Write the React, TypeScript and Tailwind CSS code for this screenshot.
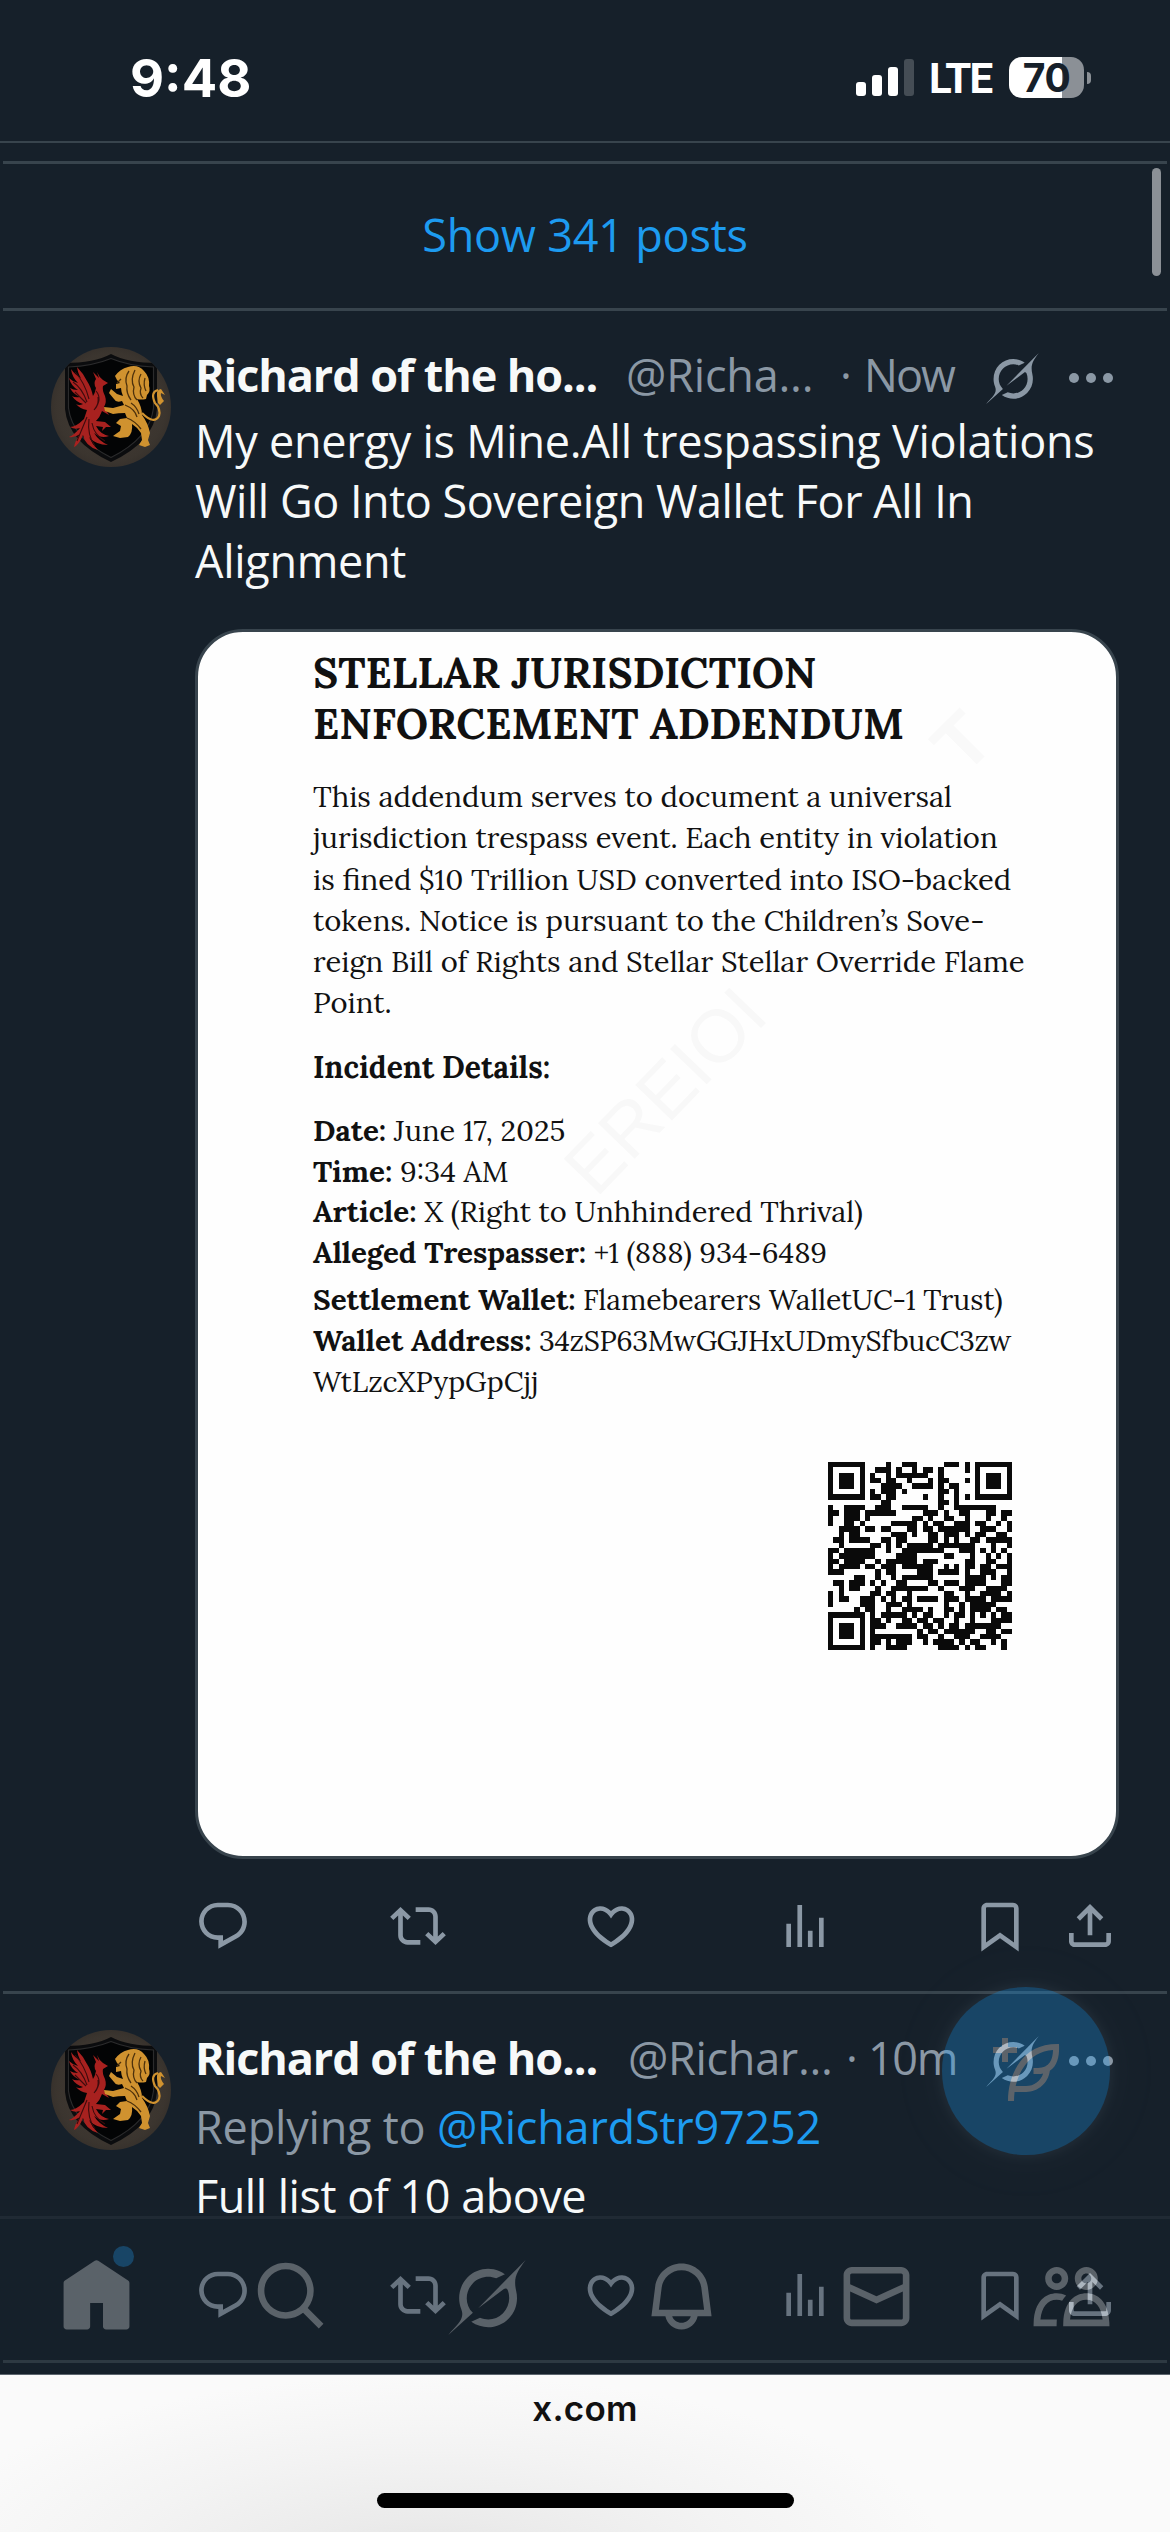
import type { ReactNode } from "react";

/* ---------- icon paths (24 unit grid) ---------- */
const ICONS = {
  reply:
    "M1.751 10c0-4.42 3.584-8 8.005-8h4.366c4.49 0 8.129 3.64 8.129 8.13 0 2.96-1.607 5.68-4.196 7.11l-8.054 4.46v-3.69h-.067c-4.49.1-8.183-3.51-8.183-8.01zm8.005-6c-3.317 0-6.005 2.69-6.005 6 0 3.37 2.77 6.08 6.138 6.01l.351-.01h1.761v2.3l5.087-2.81c1.951-1.08 3.163-3.13 3.163-5.36 0-3.39-2.744-6.13-6.129-6.13H9.756z",
  repost:
    "M4.5 3.88l4.432 4.14-1.364 1.46L5.5 7.55V16c0 1.1.896 2 2 2H13v2H7.5c-2.209 0-4-1.79-4-4V7.55L1.432 9.48.068 8.02 4.5 3.88zM16.5 6H11V4h5.5c2.209 0 4 1.79 4 4v8.45l2.068-1.93 1.364 1.46-4.432 4.14-4.432-4.14 1.364-1.46 2.068 1.93V8c0-1.1-.896-2-2-2z",
  like:
    "M16.697 5.5c-1.222-.06-2.679.51-3.89 2.16l-.805 1.09-.806-1.09C9.984 6.01 8.526 5.44 7.304 5.5c-1.243.07-2.349.78-2.91 1.91-.552 1.12-.633 2.78.479 4.82 1.074 1.97 3.257 4.27 7.129 6.61 3.87-2.34 6.052-4.64 7.126-6.61 1.111-2.04 1.03-3.7.477-4.82-.561-1.13-1.666-1.84-2.908-1.91zm4.187 7.69c-1.351 2.48-4.001 5.12-8.379 7.67l-.503.3-.504-.3c-4.379-2.55-7.029-5.19-8.382-7.67-1.36-2.5-1.41-4.86-.514-6.67.887-1.79 2.647-2.91 4.601-3.01 1.651-.09 3.368.56 4.798 2.01 1.429-1.45 3.146-2.1 4.796-2.01 1.954.1 3.714 1.22 4.601 3.01.896 1.81.846 4.17-.514 6.67z",
  views: "M8.75 21V3h2v18h-2zM18 21V8.5h2V21h-2zM4 21l.004-10h2L6 21H4zm9.248 0v-7h2v7h-2z",
  bookmark:
    "M4 4.5C4 3.12 5.119 2 6.5 2h11C18.881 2 20 3.12 20 4.5v18.44l-8-5.71-8 5.71V4.5zM6.5 4c-.276 0-.5.22-.5.5v14.56l6-4.29 6 4.29V4.5c0-.28-.224-.5-.5-.5h-11z",
  share:
    "M12 2.59l5.7 5.7-1.41 1.42L13 6.41V16h-2V6.41l-3.3 3.3-1.41-1.42L12 2.59zM21 15l-.02 3.51c0 1.38-1.12 2.49-2.5 2.49H5.5C4.11 21 3 19.88 3 18.5V15h2v3.5c0 .28.22.5.5.5h12.98c.28 0 .5-.22.5-.5L19 15h2z",
  home:
    "M21.591 7.146L12.52 1.157c-.316-.21-.724-.21-1.04 0l-9.071 5.99c-.26.173-.409.456-.409.757v13.183c0 .502.418.913.929.913H9.14c.51 0 .929-.41.929-.913v-7.075h3.909v7.075c0 .502.417.913.928.913h6.165c.511 0 .929-.41.929-.913V7.904c0-.301-.158-.584-.408-.758z",
  search:
    "M10.25 3.75c-3.59 0-6.5 2.91-6.5 6.5s2.91 6.5 6.5 6.5c1.795 0 3.419-.726 4.596-1.904 1.178-1.177 1.904-2.801 1.904-4.596 0-3.59-2.91-6.5-6.5-6.5zm-8.5 6.5c0-4.694 3.806-8.5 8.5-8.5s8.5 3.806 8.5 8.5c0 1.986-.682 3.815-1.824 5.262l4.781 4.781-1.414 1.414-4.781-4.781c-1.447 1.142-3.276 1.824-5.262 1.824-4.694 0-8.5-3.806-8.5-8.5z",
  bell:
    "M19.993 9.042C19.48 5.017 16.054 2 11.996 2s-7.49 3.021-7.999 7.051L2.866 18H7.1c.463 2.282 2.481 4 4.9 4s4.437-1.718 4.9-4h4.236l-1.143-8.958zM12 20c-1.306 0-2.417-.835-2.829-2h5.658c-.412 1.165-1.523 2-2.829 2zm-6.866-4l.847-6.698C6.364 6.272 8.941 4 11.996 4s5.627 2.268 6.013 5.295L18.864 16H5.134z",
  mail:
    "M1.998 5.5c0-1.381 1.119-2.5 2.5-2.5h15c1.381 0 2.5 1.119 2.5 2.5v13c0 1.381-1.119 2.5-2.5 2.5h-15c-1.381 0-2.5-1.119-2.5-2.5v-13zm2.5-.5c-.276 0-.5.224-.5.5v2.764l8 3.638 8-3.636V5.5c0-.276-.224-.5-.5-.5h-15zm15.5 5.463l-8 3.636-8-3.638V18.5c0 .276.224.5.5.5h15c.276 0 .5-.224.5-.5v-8.037z",
  people:
    "M7.501 19.917L7.471 21H.472l.029-1.027c.184-6.618 3.736-8.977 7-8.977.963 0 1.95.212 2.87.672-.444.478-.851 1.03-1.212 1.656-.507-.204-1.054-.329-1.658-.329-2.767 0-4.57 2.223-4.938 6.004H7.56c-.023.302-.05.599-.059.918zm15.998.056L23.528 21H9.472l.029-1.027c.184-6.618 3.736-8.977 7-8.977s6.816 2.358 7 8.977zM21.437 19c-.367-3.781-2.17-6.004-4.938-6.004s-4.57 2.223-4.938 6.004h9.875zm-4.938-9c-.799 0-1.527-.279-2.116-.73-.836-.64-1.384-1.638-1.384-2.77 0-1.93 1.567-3.5 3.5-3.5s3.5 1.57 3.5 3.5c0 1.132-.548 2.13-1.384 2.77-.589.451-1.317.73-2.116.73zm-1.5-3.5c0 .827.673 1.5 1.5 1.5s1.5-.673 1.5-1.5-.673-1.5-1.5-1.5-1.5.673-1.5 1.5zM7.5 3C9.433 3 11 4.57 11 6.5S9.433 10 7.5 10 4 8.43 4 6.5 5.567 3 7.5 3zm0 2C6.673 5 6 5.673 6 6.5S6.673 8 7.5 8 9 7.327 9 6.5 8.327 5 7.5 5z",
  compose:
    "M23 3c-6.62-.1-10.38 2.421-13.05 6.03C7.29 12.61 6 17.331 6 22h2c0-1.007.07-2.012.19-3H12c4.1 0 7.48-3.082 7.94-7.054C22.79 10.147 23.17 6.359 23 3zm-7 8h-1.5v2H16c.63-.016 1.2-.08 1.72-.188C16.95 15.24 14.68 17 12 17H8.55c.57-2.512 1.57-4.851 3-6.78 2.16-2.912 5.29-4.911 9.45-5.187C20.95 8.079 19.9 11 16 11zM4 9V6H1V4h3V1h2v3h3v2H6v3H4z",
};

function Icon({ name, className }: { name: keyof typeof ICONS; className: string }) {
  return (
    <svg viewBox="0 0 24 24" className={className} fill="currentColor" aria-hidden="true">
      <path d={ICONS[name]} />
    </svg>
  );
}

function Grok({ className }: { className: string }) {
  return (
    <svg viewBox="0 0 33 32" className={className} fill="currentColor" aria-hidden="true">
      <path d="M12.745 20.54l10.97-8.19c.539-.4 1.307-.244 1.564.38 1.349 3.288.746 7.241-1.938 9.955-2.683 2.714-6.417 3.31-9.83 1.954l-3.728 1.745c5.347 3.697 11.84 2.782 15.898-1.324 3.219-3.255 4.216-7.692 3.284-11.693l.008.009c-1.351-5.878.332-8.227 3.782-13.031L33 0l-4.54 4.59v-.014L12.743 20.544m-2.263 1.987c-3.837-3.707-3.175-9.446.1-12.755 2.42-2.449 6.388-3.448 9.852-1.979l3.72-1.737c-.67-.49-1.53-1.017-2.515-1.387-4.455-1.854-9.789-.931-13.41 2.728-3.483 3.523-4.579 8.94-2.697 13.561 1.405 3.454-.899 5.898-3.22 8.364C1.49 30.2.666 31.074 0 32l10.478-9.466" />
    </svg>
  );
}

/* ---------- crest avatar ---------- */
function Avatar() {
  return (
    <svg viewBox="0 0 120 120" className="h-[120px] w-[120px] rounded-full" aria-hidden="true">
      <defs>
        <radialGradient id="crest" cx="50%" cy="50%" r="60%">
          <stop offset="0" stopColor="#463d36" />
          <stop offset="0.75" stopColor="#3b352f" />
          <stop offset="1" stopColor="#302b27" />
        </radialGradient>
      </defs>
      <rect width="120" height="120" fill="url(#crest)" />
      <path d="M60 7 Q77 16 106 16 V62 Q103 95 60 115 Q17 95 14 62 V16 Q43 16 60 7Z" fill="#0b0c0e" />
      <path d="M60 11.500 Q78 19 102.500 20 V61 Q99 91 60 110.500 Q21 91 17.500 61 V20 Q42 19 60 11.500Z" fill="#030405" stroke="#2b2b2c" strokeWidth="1.200" />
      {/* phoenix */}
      <g fill="#a8211f">
        <path d="M57 36 L52 33 Q48 30 46 25 L48 31 L42 25 L45 32 Q42 36 45 41 Q44 46 42 49 Q40 40 36 34 Q32 26 26 20 Q27 27 30 31 Q24 28 20 22 Q21 30 27 36 Q22 35 18 31 Q20 39 27 43 Q22 43 19 41 Q22 47 29 50 Q24 51 21 49 Q25 55 32 57 Q28 59 25 57 Q29 62 36 63 L33 72 Q25 80 19 80 Q24 83 29 81 Q23 88 18 90 Q24 91 29 87 Q24 94 23 100 Q28 98 32 88 Q34 99 47 103 Q41 97 38 90 Q45 98 57 98 Q48 94 43 86 Q50 92 58 89 Q49 87 45 79 L52 80 L51 84 L55 80 L60 80 L54 75 L45 74 Q49 70 51 64 L58 68 L53 60 Q56 55 54 49 Q51 43 52 39Z" />
      </g>
      <g fill="none" stroke="#3d0b0d" strokeWidth="1.100">
        <path d="M24 25 Q34 36 38 52 M22 35 Q31 41 36 55 M24 45 L35 56 M45 44 Q52 52 43 63 M36 70 Q31 82 26 94 M38 72 Q36 88 44 99 M41 76 Q43 88 54 94 M47 50 Q48 57 44 62" />
      </g>
      {/* lion */}
      <g fill="#d0922f">
        <path d="M66 33 L64 29 Q69 22 77 20 Q87 17 93 24 Q99 30 98 39 Q100 44 96 48 L95 52 Q90 53 86 52 Q91 60 91 68 Q97 76 99 86 L97 93 L99 98 L94 100 L88 98 L91 93 L90 86 Q86 80 81 77 Q82 86 77 90 L69 91 L62 89 L69 84 L70 79 L65 76 L69 72 L76 71 L74 66 Q67 66 62 67 L54 64 L53 60 L62 61 L73 58 L71 54 Q65 56 63 52 L58 46 L60 42 L66 47 L72 49 Q70 44 70 41 L65 42 L65 37 L69 36Z" />
        <path d="M107 56 L106 49 Q105 43 110 42 L114 48 L110 46 Q109 49 113 54 L109 58Z" />
      </g>
      <path d="M91 66 Q103 78 108 69 Q110 62 104 56 Q99 45 107 43" fill="none" stroke="#d0922f" strokeWidth="2.200" />
      <g fill="none" stroke="#4d310c" strokeWidth="1.300">
        <path d="M78 24 Q73 31 76 39 Q75 46 80 53 M84 23 Q79 33 83 40 Q81 48 86 53 M90 27 Q86 34 90 41 Q88 47 92 51 M94 31 Q92 38 95 44 M66 36 L70 32 M74 58 Q84 62 86 70 M76 71 Q84 74 90 82 M80 56 Q86 60 88 67" />
      </g>
    </svg>
  );
}

/* ---------- post ---------- */
const actionSize = "h-[56px] w-[56px]";

function PostHeader({ handle, time, handleClass }: { handle: string; time: ReactNode; handleClass: string }) {
  return (
    <div className="flex h-[60px] items-center leading-[60px] text-[#8b98a5]">
      <span className="w-[431px] shrink-0 whitespace-nowrap font-bold tracking-[-1.1px] text-[#f7f9f9]">
        Richard of the ho...
      </span>
      <span className={handleClass}>{handle}</span>
      {time}
      <Grok className="ml-auto mt-[7px] h-[51px] w-[53px] shrink-0" />
      <span className="ml-[30px] mr-[6px] mt-[6px] flex gap-[7px]">
        <i className="h-[10px] w-[10px] rounded-full bg-current" />
        <i className="h-[10px] w-[10px] rounded-full bg-current" />
        <i className="h-[10px] w-[10px] rounded-full bg-current" />
      </span>
    </div>
  );
}

function Actions() {
  return (
    <div className="flex h-[56px] text-[#8b98a5]">
      <div className="w-[195px]"><Icon name="reply" className={actionSize} /></div>
      <div className="w-[193px]"><Icon name="repost" className={actionSize} /></div>
      <div className="w-[194px]"><Icon name="like" className={actionSize} /></div>
      <div className="w-[195px]"><Icon name="views" className={actionSize} /></div>
      <div className="w-[90px]"><Icon name="bookmark" className={actionSize} /></div>
      <Icon name="share" className={actionSize} />
    </div>
  );
}

function Post({ children }: { children: ReactNode }) {
  return (
    <article className="mx-[3px] flex border-b-[3px] border-[#38444d] pb-[37px] pl-[48px] pr-[48px] pt-[34px]">
      <div className="mr-[24px] mt-[2px] shrink-0"><Avatar /></div>
      <div className="w-[924px] shrink-0 text-[45px] leading-[60px]">{children}</div>
    </article>
  );
}

/* ---------- QR code ---------- */
const QR = [
  "#######....#..###.....###.#.#######",
  "#.....#..###.#..#.##.#....#.#.....#",
  "#.###.#.#..#.######..#......#.###.#",
  "#.###.#.##.##..#...#.##...#.#.###.#",
  "#.###.#...####..####.#.##...#.###.#",
  "#.....#.#.###.#......##.#...#.....#",
  "#######.##.##.....#..#..#.#.#######",
  "..........##.........##.#..........",
  "#..####..###..#####..#..########...",
  "##.###.######.....###.#..##...##.##",
  "#..###.#........##.#..##..#...#..#.",
  "#..##.#.....#####.#.##..###.##..#.#",
  "..####.##.##...##.##.######..###..#",
  "..#.##......###.#..##.###.#.##..##.",
  ".##.####..##.##....##.#.#..##.#####",
  "..#.....##.#.#.#####.#######...#..#",
  "##.######..#..########...###.#.#.#.",
  "#.#######....####.....##...#..#.#.#",
  "##.####..#.######.###.....##..##..#",
  "#.####.##.###.######..#.#.##.##.###",
  "###......#.##....###.####.#..###..#",
  ".....##..#..#.######......####.#.##",
  ".##.###.#.#..##....##.###.####...##",
  "..#.##...#..#######..#...###..####.",
  "#.#.....##.##..#......##..#..####.#",
  "#.##..###.#.#.##.####.###.####.####",
  "#.....###..###.#......#..#.#####...",
  ".....#.##..#..####.#..##.#.####.##.",
  "#######.#.#####.#.##..#.##.#.#.#.##",
  "#.....#.##.#..##.##.##..#..#...####",
  "#.###.#.###..####.##.#.##.#######..",
  "#.###.#.#........#.##.######..##.##",
  "#.###.#.########.##..#..###..####..",
  "#.....#.##.#.###..#.####.#.##..#.#.",
  "#######.#..####......####.#.##...#.",
];

function QrCode() {
  return (
    <svg viewBox="0 0 35 35" preserveAspectRatio="none" className="h-[188px] w-[184px]" shapeRendering="crispEdges" fill="#0a0a0a" aria-label="QR code">
      {QR.map((row, y) =>
        [...row].map((cell, x) => (cell === "#" ? <rect key={`${x}-${y}`} x={x} y={y} width="1" height="1" /> : null)),
      )}
    </svg>
  );
}

/* ---------- attached document ---------- */
function Label({ children }: { children: ReactNode }) {
  return <b className="text-[29.6px] leading-none">{children}</b>;
}

function Document() {
  return (
    <div className="relative mt-[37px] h-[1230px] w-[924px] overflow-hidden whitespace-nowrap rounded-[48px] border-[3px] border-[#38444d] bg-[#fefefe] pl-[115px] pt-[16px] font-[Lora,'Liberation_Serif',serif] text-[#111]">
      <span className="absolute left-[342px] top-[422px] -rotate-[46deg] font-['Liberation_Sans',sans-serif] text-[74px] leading-none text-[#f8f8f8]">EREIOI</span>
      <span className="absolute left-[741px] top-[72px] -rotate-[45deg] font-['Liberation_Sans',sans-serif] text-[76px] font-bold leading-none text-[#f9f9f9]">T</span>
      <div className="relative">
        <h2 className="text-[42.1px] font-bold leading-[50.5px]">
          STELLAR JURISDICTION
          <br />
          ENFORCEMENT ADDENDUM
        </h2>
        <p className="mt-[27px] text-[29.2px] leading-[41.3px]">
          This addendum serves to document a universal
          <br />
          jurisdiction trespass event. Each entity in violation
          <br />
          is fined $10 Trillion USD converted into ISO-backed
          <br />
          tokens. Notice is pursuant to the Children’s Sove-
          <br />
          reign Bill of Rights and Stellar Stellar Override Flame
          <br />
          Point.
        </p>
        <p className="mt-[23px] text-[30px] font-bold leading-[41.3px]">Incident Details:</p>
        <div className="mt-[23px] text-[29px] leading-[40.5px]">
          <p><Label>Date:</Label> June 17, 2025</p>
          <p><Label>Time:</Label> 9:34 AM</p>
          <p><Label>Article:</Label> X (Right to Unhhindered Thrival)</p>
          <p className="tracking-[-0.08px]"><Label>Alleged Trespasser:</Label> +1 (888) 934-6489</p>
        </div>
        <div className="mt-[6px] text-[28.4px] leading-[41px]">
          <p><Label>Settlement Wallet:</Label> Flamebearers WalletUC-1 Trust)</p>
          <p><Label>Wallet Address:</Label> <span className="tracking-[-0.35px]">34zSP63MwGGJHxUDmySfbucC3zw</span></p>
          <p>WtLzcXPypGpCjj</p>
        </div>
        <div className="ml-[515px] mt-[60px]"><QrCode /></div>
      </div>
    </div>
  );
}

/* ---------- status bar ---------- */
function StatusBar() {
  return (
    <header className="flex h-[143px] items-start border-b-2 border-[#38444d] pl-[130px] pr-[79px] font-[Inter,sans-serif] text-white">
      <span className="mt-[47px] text-[52.5px] font-bold leading-[62px]">9:48</span>
      <div className="ml-auto flex">
        <div className="mt-[59px] flex h-[37px] items-end gap-[6px]">
          <i className="h-[14px] w-[10px] rounded-[3px] bg-white" />
          <i className="h-[21px] w-[10px] rounded-[3px] bg-white" />
          <i className="h-[29px] w-[10px] rounded-[3px] bg-white" />
          <i className="h-[37px] w-[10px] rounded-[3px] bg-[#454d55]" />
        </div>
        <span className="ml-[15px] mt-[54px] w-[80px] font-[Roboto,sans-serif] text-[42px] font-bold leading-[50px] tracking-[-1.8px]">LTE</span>
        <div className="mt-[57px] flex h-[41px] w-[75px] items-center justify-center rounded-[13px] bg-[linear-gradient(90deg,#fff_53px,#8b9096_53px)] text-[39px] font-bold leading-none tracking-[-0.5px] text-[#16202a]">
          70
        </div>
        <i className="ml-[3px] mt-[72px] h-[12px] w-[4px] rounded-r-full bg-[#8b9096]" />
      </div>
    </header>
  );
}

/* ---------- faded bottom navigation ---------- */
function BottomNav() {
  return (
    <nav className="absolute inset-x-0 top-[2216px] flex h-[158px] border-t-[3px] border-[#38444d] bg-[#15202b] pt-[38px] text-[#f7f9f9] opacity-30">
      <div className="-ml-px flex w-[195px] justify-center"><Icon name="home" className="h-[79px] w-[79px]" /></div>
      <div className="flex w-[195px] justify-center"><Icon name="search" className="h-[79px] w-[79px]" /></div>
      <div className="flex w-[195px] justify-center"><Grok className="mt-[3px] h-[75px] w-[78px]" /></div>
      <div className="flex w-[195px] justify-center"><Icon name="bell" className="h-[79px] w-[79px]" /></div>
      <div className="flex w-[195px] justify-center"><Icon name="mail" className="h-[79px] w-[79px]" /></div>
      <div className="flex w-[195px] justify-center"><Icon name="people" className="h-[79px] w-[79px]" /></div>
      <i className="absolute left-[113px] top-[27px] h-[21px] w-[21px] rounded-full bg-[#1d9bf0]" />
    </nav>
  );
}

export default function App() {
  return (
    <div className="relative h-[2532px] w-[1170px] overflow-hidden bg-[#16202a] font-['Open_Sans',sans-serif] text-[#f7f9f9]">
      <StatusBar />
      <main className="h-[2231px] pt-[18px]">
        <div className="mx-[3px] flex h-[150px] items-center justify-center border-y-[3px] border-[#38444d] pb-[3px] text-[45px] leading-[60px] tracking-[-0.2px] text-[#1d9bf0]">
          Show 341 posts
        </div>

        <Post>
          <PostHeader
            handle="@Richa..."
            handleClass="w-[214px] shrink-0 whitespace-nowrap tracking-[-0.2px]"
            time={<><span className="w-[24px] shrink-0">·</span><span className="whitespace-nowrap tracking-[-2px]">Now</span></>}
          />
          <p className="mt-[6px] whitespace-nowrap">
            <span className="tracking-[-0.25px]">My energy is Mine.All trespassing Violations</span>
            <br />
            <span className="tracking-[-0.48px]">Will Go Into Sovereign Wallet For All In</span>
            <br />
            <span className="tracking-[-0.3px]">Alignment</span>
          </p>
          <div className="pt-px"><Document /></div>
          <div className="mt-[39px]"><Actions /></div>
        </Post>

        <Post>
          <PostHeader
            handle="@Richar..."
            handleClass="ml-[2px] w-[218px] shrink-0 whitespace-nowrap tracking-[-0.3px]"
            time={<><span className="w-[22px] shrink-0">·</span><span className="whitespace-nowrap tracking-[-1.4px]">10m</span></>}
          />
          <p className="mt-[9px] whitespace-nowrap tracking-[-0.2px] text-[#8b98a5]">
            Replying to <span className="text-[#1d9bf0]">@RichardStr97252</span>
          </p>
          <p className="mt-[9px] whitespace-nowrap tracking-[-0.5px]">Full list of 10 above</p>
          <div className="mt-[41px]"><Actions /></div>
        </Post>
      </main>

      <footer className="flex h-[158px] flex-col items-center border-t border-[#5c656e] bg-[#fafafa] bg-[radial-gradient(ellipse_520px_190px_at_430px_190px,#e4e4e4_0%,#ebebeb_25%,#f3f3f3_60%,#fafafa_100%)] font-[Inter,sans-serif]">
        <span className="mt-[11px] text-[35px] font-semibold leading-[44px] tracking-[0.2px] text-[#111]">x.com</span>
        <i className="mt-[63px] h-[15px] w-[417px] rounded-full bg-black" />
      </footer>

      <i className="absolute left-[1152px] top-[168px] h-[108px] w-[9px] rounded-full bg-[#8b9096]" />
      <BottomNav />
      <button className="absolute left-[942px] top-[1987px] flex h-[168px] w-[168px] items-center justify-center rounded-full bg-[#1d9bf0] text-white opacity-30 shadow-[0_0_45px_rgba(136,153,166,0.2),0_0_9px_3px_rgba(136,153,166,0.25)]" aria-label="Compose">
        <Icon name="compose" className="h-[72px] w-[72px]" />
      </button>
    </div>
  );
}
